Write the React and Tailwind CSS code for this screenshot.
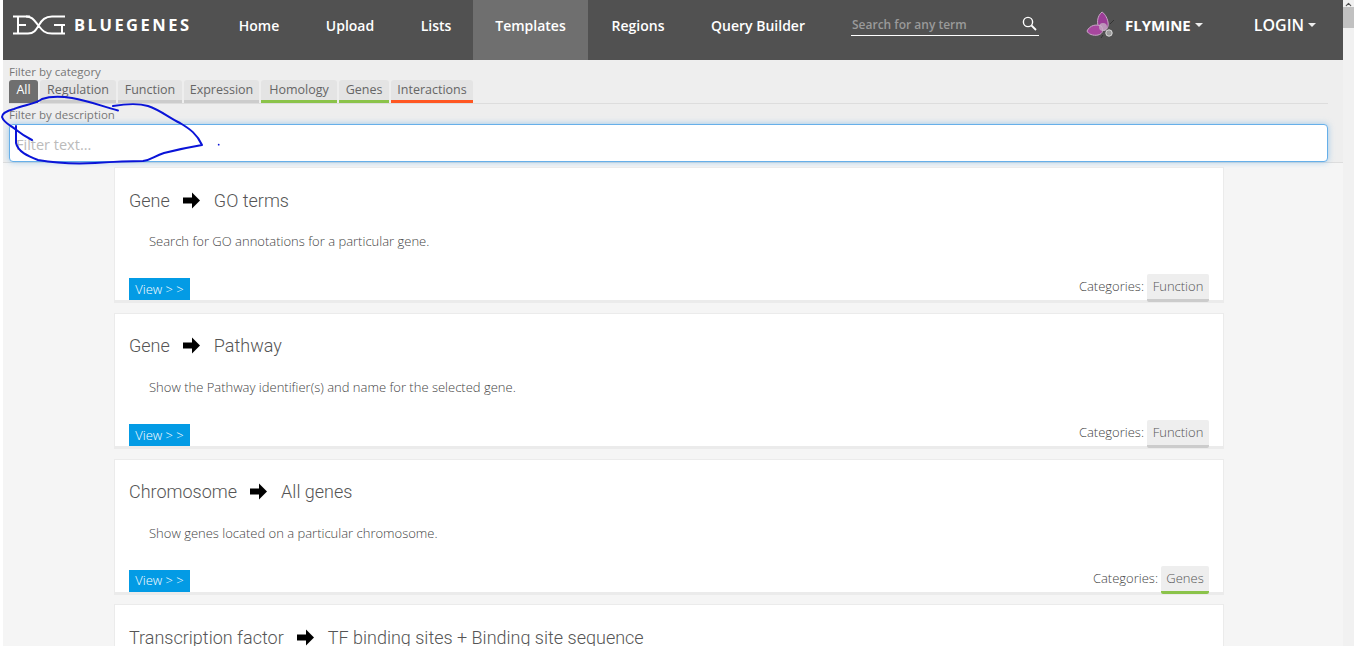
import React from "react";
import { ChevronUp } from "lucide-react";

const nav = [
  ["Home", "w-[94px]"],
  ["Upload", "w-[88px]"],
  ["Lists", "w-[79px] pl-[5px]"],
  ["Templates", "w-[115px] bg-[#6f6f6f]"],
  ["Regions", "w-[100px]"],
  ["Query Builder", "w-[140px]"],
];

const filters = [
  ["All", "w-[29px] bg-[#6f6f6f] text-white border-[#6f6f6f]"],
  ["Regulation", "w-[76px] border-[#cccccc]"],
  ["Function", "w-[64px] border-[#cccccc]"],
  ["Expression", "w-[75px] border-[#cccccc]"],
  ["Homology", "w-[76px] border-[#8bc34a]"],
  ["Genes", "w-[50px] border-[#8bc34a]"],
  ["Interactions", "w-[82px] border-[#ff5722]"],
];

const cards = [
  { from: "Gene", to: "GO terms", desc: "Search for GO annotations for a particular gene.", tag: "Function", tagW: "w-[62px]", line: "border-[#cccccc]" },
  { from: "Gene", to: "Pathway", desc: "Show the Pathway identifier(s) and name for the selected gene.", tag: "Function", tagW: "w-[62px]", line: "border-[#cccccc]" },
  { from: "Chromosome", to: "All genes", desc: "Show genes located on a particular chromosome.", tag: "Genes", tagW: "w-[48px]", line: "border-[#8bc34a]" },
];

function Arrow() {
  return (
    <svg width="17" height="17" viewBox="0 0 17 17" className="ml-[13px] mr-[14px] shrink-0">
      <path d="M0 5.5H9V0.5L17 8.5L9 16.5V11.5H0Z" fill="#000" />
    </svg>
  );
}

function Logo() {
  return (
    <svg width="54" height="20" viewBox="0 0 54 20" fill="none" stroke="#fff" strokeWidth="2">
      <path d="M1 1.5H18M6 1.5V18.5M1 18.5H16M6 10H14" />
      <path d="M14 1.5C20 1.5 22 5 26 10C30 15 32 18.5 40 18.5H53M16 18.5C22 18.5 24 15 27 10C30 5 33 1.5 40 1.5H53M42 10H53M50 10V18.5" />
    </svg>
  );
}

function Fly() {
  return (
    <svg width="30" height="28" viewBox="0 0 30 28" className="shrink-0">
      <path d="M16 1C11 5 10 13 14 19C20 21 23 17 22 11C21 6 18 2 16 1Z" fill="#9c3c97" stroke="#c9a7c7" strokeWidth="1" />
      <path d="M1 20C4 14 10 13 15 15C18 18 17 23 12 24C7 25 2 23 1 20Z" fill="#a8479f" stroke="#c9a7c7" strokeWidth="1" />
      <circle cx="17" cy="16" r="4" fill="#c7b3c6" opacity="0.75" />
      <circle cx="23" cy="22" r="3.2" fill="#9b9b9b" stroke="#dddddd" strokeWidth="1" />
      <path d="M24 13L28 9M17 24L15 27" stroke="#333" strokeWidth="1" />
    </svg>
  );
}

function Caret() {
  return <span className="ml-[4px] inline-block w-0 h-0 border-x-[4px] border-x-transparent border-t-[4px] border-t-[#eeeeee]" />;
}

function Card({ from, to, desc, tag, tagW, line }) {
  return (
    <article className="h-[136px] mb-[9.8px] bg-white border-x border-t border-[#ebebeb] border-b-[3px] flex flex-col pl-[14px] pr-[14px]">
      <h2 className="flex items-center h-[28px] mt-[18px] text-[18px] font-light text-[#555555] font-['Roboto',sans-serif]">
        {from}
        <Arrow />
        {to}
      </h2>
      <p className="mt-[19px] ml-[20px] text-[13px] leading-[17px] font-light text-[#444444]">{desc}</p>
      <div className="mt-auto flex items-end justify-between">
        <button className="w-[61px] h-[22px] pt-[1px] bg-[#039be5] text-white text-[13px] font-light">View &gt; &gt;</button>
        <div className="flex items-center text-[13px] font-light text-[#444444]">
          <span className="mr-[3px]">Categories:</span>
          <span className={`${tagW} h-[28px] -mb-[2px] pt-[1px] flex items-center justify-center rounded-[2px] bg-[#eeeeee] border-b-[3px] ${line} text-[#555555]`}>{tag}</span>
        </div>
      </div>
    </article>
  );
}

export default function App() {
  return (
    <div className="relative h-[646px] overflow-hidden flex bg-white font-['Open_Sans',sans-serif]">
      <div className="ml-[3px] w-[1340px] h-full flex flex-col bg-[#f5f5f5]">
        <header className="h-[60px] shrink-0 bg-[#515151] flex items-stretch text-white">
          <div className="w-[209px] shrink-0 flex items-center pl-[9px] pb-[10px]">
            <Logo />
            <span className="ml-[8px] mt-[1px] text-[16.5px] font-bold tracking-[2.5px]">BLUEGENES</span>
          </div>
          <nav className="flex">
            {nav.map(([label, cls]) => (
              <a key={label} className={`${cls} flex items-center justify-center pb-[9px] text-[14px] font-semibold`}>{label}</a>
            ))}
          </nav>
          <div className="ml-[23px] mt-[15px] w-[188px] h-[21px] border-b border-white flex items-center justify-between pl-[1px] pr-[2px]">
            <span className="text-[12px] font-semibold text-[#9a9a9a]">Search for any term</span>
            <svg width="15" height="15" viewBox="0 0 15 15" fill="none" stroke="#fff" strokeWidth="1.4" className="mb-[3px]">
              <circle cx="6" cy="6" r="4.6" />
              <path d="M9.5 9.5L14 14" strokeWidth="1.8" />
            </svg>
          </div>
          <div className="ml-[47px] mt-[11px] h-[28px] flex items-center">
            <Fly />
            <span className="ml-[9px] text-[15px] font-bold">FLYMINE</span>
            <Caret />
          </div>
          <div className="ml-[51px] mt-[11px] h-[28px] flex items-center">
            <span className="text-[16px] font-semibold">LOGIN</span>
            <Caret />
          </div>
        </header>

        <section className="h-[103px] shrink-0 bg-[#eeeeee] border-b border-[#dddddd] pl-[6px] pr-[15px]">
          <div className="h-[20px] pt-[4px] text-[11.5px] leading-[15px] text-[#777777]">Filter by category</div>
          <div className="flex gap-[2px] h-[23px] border-b-0">
            {filters.map(([label, cls]) => (
              <span key={label} className={`${cls} h-[23px] flex items-center justify-center pt-[1px] rounded-t-[3px] border-b-[3px] ${label === "All" ? "" : "bg-[#e4e4e4] text-[#666666]"} text-[12.5px]`}>{label}</span>
            ))}
          </div>
          <div className="border-t border-[#dddddd] h-[21px] pt-[3px] text-[11.5px] leading-[15px] text-[#777777]">Filter by description</div>
          <input
            readOnly
            placeholder="Filter text..."
            className="block w-full h-[38px] px-[6px] pt-[2px] rounded-[4px] bg-white border border-[#66afe9] shadow-[0_0_6px_rgba(102,175,233,0.6)] text-[14.5px] placeholder:text-[#bbbbbb] outline-none"
          />
        </section>

        <main className="ml-[111px] mt-[4px] w-[1110px]">
          {cards.map((c) => <Card key={c.to} {...c} />)}
          <article className="h-[135px] bg-white border-x border-t border-[#ebebeb] pl-[14px]">
            <h2 className="flex items-center h-[28px] mt-[18px] text-[18px] font-light text-[#555555] font-['Roboto',sans-serif]">
              Transcription factor
              <Arrow />
              TF binding sites + Binding site sequence
            </h2>
          </article>
        </main>
      </div>

      <aside className="w-[11px] h-full bg-[#f1f1f1] flex flex-col items-center">
        <ChevronUp size={9} strokeWidth={3} className="text-[#505050]" />
        <div className="mt-[-2px] w-[11px] h-[21px] bg-[#c1c1c1]" />
      </aside>

      <svg width="240" height="80" viewBox="0 0 240 80" fill="none" className="absolute left-0 top-[90px] pointer-events-none">
        <path
          d="M118 20.5C104 17 90 11 72 8C58 6 48 7 42 9C36 14 24 15 14 19C6 21 2 23 2 27C4 33 10 35 15 39C20 43 26 47 32 50"
          stroke="#0a14d8" strokeWidth="2" strokeLinecap="round" strokeLinejoin="round"
        />
        <path
          d="M113 16C125 14 138 13 148 16C160 20 168 27 180 33C190 39 197 44 202 55C190 57 176 60 164 63C154 66 152 70 143 71C125 71 110 72 95 73C75 74 55 73 38 70C28 66 18 62 16 53L16 36"
          stroke="#0a14d8" strokeWidth="2" strokeLinecap="round" strokeLinejoin="round"
        />
        <circle cx="218.7" cy="54.7" r="0.9" fill="#0a14d8" />
      </svg>
    </div>
  );
}
